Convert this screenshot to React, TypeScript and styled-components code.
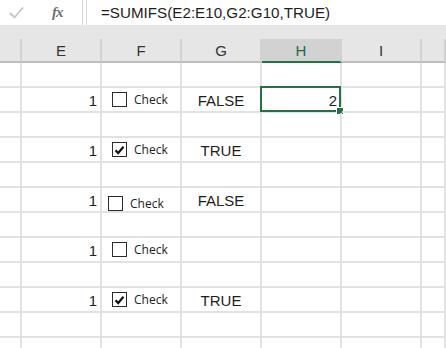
import React from 'react';
import styled, {createGlobalStyle, css} from 'styled-components';

const GlobalStyle = createGlobalStyle`
  html, body {
    margin: 0;
    padding: 0;
    background: #ffffff;
  }
  body {
    font-family: "Liberation Sans", Arial, sans-serif;
  }
`;

const Sheet = styled.div`
  width: 446px;
  height: 348px;
  overflow: hidden;
  background: #ffffff;
  display: flex;
  flex-direction: column;
`;

const FormulaBar = styled.div`
  display: flex;
  height: 25px;
  flex-shrink: 0;
  background: #ffffff;
`;

const NameBox = styled.div`
  width: 82px;
  display: flex;
  align-items: center;
  border-right: 1px solid #d6d6d6;
  > .ok{
    margin-left: 9px;
    width: 15px;
    height: 13px;
  }
  > .fx{
    margin-left: 28px;
    font-family: "Liberation Serif", "Times New Roman", serif;
    font-style: italic;
    font-weight: bold;
    font-size: 15px;
    color: #707070;
    letter-spacing: -1px;
  }
`;

const FormulaInput = styled.div`
  flex: 1;
  margin-left: 3px;
  border-left: 1px solid #d6d6d6;
  padding-left: 14px;
  display: flex;
  align-items: center;
  font-size: 15.2px;
  color: #1e1e1e;
`;

const Strip = styled.div`
  height: 14px;
  flex-shrink: 0;
  background: #e6e6e6;
`;

const Grid = styled.div`
  display: grid;
  grid-template-columns: 22px repeat(5, 80px) 1fr;
`;

const HeaderCell = styled.div<{$selected?: boolean}>`
  box-sizing: border-box;
  height: 24px;
  display: flex;
  align-items: center;
  justify-content: center;
  background: #e6e6e6;
  border-right: 2px solid #d2d2d2;
  border-bottom: 2px solid #bdbdbd;
  font-size: 15px;
  color: #333333;
  ${p => p.$selected && css`
    background: #d2d2d2;
    border-bottom-color: #217346;
    color: #1e6b41;
  `}
`;

const Cell = styled.div<{$align?: 'left' | 'center' | 'right'}>`
  position: relative;
  box-sizing: border-box;
  height: 25px;
  display: flex;
  align-items: center;
  padding: 2px 3px 0;
  justify-content: ${p => p.$align === 'right' ? 'flex-end' : p.$align === 'center' ? 'center' : 'flex-start'};
  border-right: 2px solid #e2e2e2;
  border-bottom: 2px solid #e2e2e2;
  font-size: 15px;
  color: #1e1e1e;
`;

const Selection = styled.div`
  position: absolute;
  left: -2px;
  top: -2px;
  right: -1px;
  bottom: -1px;
  border: 2px solid #217346;
  pointer-events: none;
  > .handle{
    position: absolute;
    right: -5px;
    bottom: -5px;
    width: 6px;
    height: 6px;
    background: #217346;
    border: 1px solid #ffffff;
  }
`;

const Control = styled.div<{$x: number; $y: number}>`
  position: absolute;
  left: ${p => p.$x}px;
  top: ${p => p.$y}px;
  display: flex;
  align-items: center;
  gap: 7px;
  font-family: "Open Sans", "Segoe UI", sans-serif;
  font-size: 12px;
  color: #222222;
`;

const Box = styled.span`
  box-sizing: border-box;
  width: 15px;
  height: 15px;
  border: 1.5px solid #2b2b2b;
  background: #ffffff;
  display: flex;
  align-items: center;
  justify-content: center;
`;

type CheckProps = {checked?: boolean; x?: number; y?: number};

const CheckControl: React.FC<CheckProps> = ({checked, x = 10, y = 3}) => (
    <Control $x={x} $y={y}>
        <Box>
            {checked && (
                <svg width="11" height="10" viewBox="0 0 11 10">
                    <path d="M1.5 5.2 L4.2 8 L9.5 1.8" fill="none" stroke="#111" strokeWidth="2.2"/>
                </svg>
            )}
        </Box>
        <span>Check</span>
    </Control>
);

type Row = {
    e?: string;
    f?: CheckProps;
    g?: string;
    h?: string;
    selected?: boolean;
};

const rows: Row[] = [
    {},
    {e: '1', f: {}, g: 'FALSE', h: '2', selected: true},
    {},
    {e: '1', f: {checked: true}, g: 'TRUE'},
    {},
    {e: '1', f: {x: 6, y: 7}, g: 'FALSE'},
    {},
    {e: '1', f: {}},
    {},
    {e: '1', f: {checked: true}, g: 'TRUE'},
    {},
    {},
];

const columns = ['', 'E', 'F', 'G', 'H', 'I', ''];

export default function App() {
    return (
        <>
            <GlobalStyle/>
            <Sheet>
                <FormulaBar>
                    <NameBox>
                        <svg className="ok" viewBox="0 0 15 13">
                            <path d="M1 7 L5.5 11.5 L14 1.5" fill="none" stroke="#c4c4c4" strokeWidth="1.8"/>
                        </svg>
                        <span className="fx">fx</span>
                    </NameBox>
                    <FormulaInput>=SUMIFS(E2:E10,G2:G10,TRUE)</FormulaInput>
                </FormulaBar>
                <Strip/>
                <Grid>
                    {columns.map((c, i) => (
                        <HeaderCell key={'h' + i} $selected={c === 'H'}>{c}</HeaderCell>
                    ))}
                    {rows.map((r, i) => (
                        <React.Fragment key={i}>
                            <Cell/>
                            <Cell $align="right">{r.e}</Cell>
                            <Cell>{r.f && <CheckControl {...r.f}/>}</Cell>
                            <Cell $align="center">{r.g}</Cell>
                            <Cell $align="right">
                                {r.h}
                                {r.selected && <Selection><span className="handle"/></Selection>}
                            </Cell>
                            <Cell/>
                            <Cell/>
                        </React.Fragment>
                    ))}
                </Grid>
            </Sheet>
        </>
    );
}
